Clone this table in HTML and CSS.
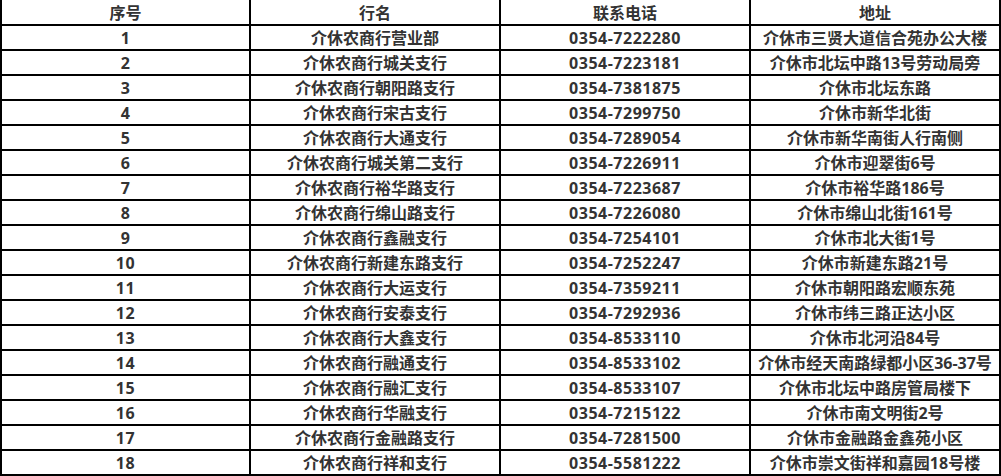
FILE: index.html
```html
<!DOCTYPE html>
<html lang="zh-CN">
<head>
<meta charset="utf-8">
<title>介休农商行网点</title>
<link rel="stylesheet" href="styles.css">
</head>
<body>
<div class="table">
  <div class="cell head">序号</div><div class="cell head">行名</div><div class="cell head">联系电话</div><div class="cell head">地址</div>
  <div class="cell num">1</div><div class="cell">介休农商行营业部</div><div class="cell num">0354-7222280</div><div class="cell">介休市三贤大道信合苑办公大楼</div>
  <div class="cell num">2</div><div class="cell">介休农商行城关支行</div><div class="cell num">0354-7223181</div><div class="cell">介休市北坛中路13号劳动局旁</div>
  <div class="cell num">3</div><div class="cell">介休农商行朝阳路支行</div><div class="cell num">0354-7381875</div><div class="cell">介休市北坛东路</div>
  <div class="cell num">4</div><div class="cell">介休农商行宋古支行</div><div class="cell num">0354-7299750</div><div class="cell">介休市新华北街</div>
  <div class="cell num">5</div><div class="cell">介休农商行大通支行</div><div class="cell num">0354-7289054</div><div class="cell">介休市新华南街人行南侧</div>
  <div class="cell num">6</div><div class="cell">介休农商行城关第二支行</div><div class="cell num">0354-7226911</div><div class="cell">介休市迎翠街6号</div>
  <div class="cell num">7</div><div class="cell">介休农商行裕华路支行</div><div class="cell num">0354-7223687</div><div class="cell">介休市裕华路186号</div>
  <div class="cell num">8</div><div class="cell">介休农商行绵山路支行</div><div class="cell num">0354-7226080</div><div class="cell">介休市绵山北街161号</div>
  <div class="cell num">9</div><div class="cell">介休农商行鑫融支行</div><div class="cell num">0354-7254101</div><div class="cell">介休市北大街1号</div>
  <div class="cell num">10</div><div class="cell">介休农商行新建东路支行</div><div class="cell num">0354-7252247</div><div class="cell">介休市新建东路21号</div>
  <div class="cell num">11</div><div class="cell">介休农商行大运支行</div><div class="cell num">0354-7359211</div><div class="cell">介休市朝阳路宏顺东苑</div>
  <div class="cell num">12</div><div class="cell">介休农商行安泰支行</div><div class="cell num">0354-7292936</div><div class="cell">介休市纬三路正达小区</div>
  <div class="cell num">13</div><div class="cell">介休农商行大鑫支行</div><div class="cell num">0354-8533110</div><div class="cell">介休市北河沿84号</div>
  <div class="cell num">14</div><div class="cell">介休农商行融通支行</div><div class="cell num">0354-8533102</div><div class="cell">介休市经天南路绿都小区36-37号</div>
  <div class="cell num">15</div><div class="cell">介休农商行融汇支行</div><div class="cell num">0354-8533107</div><div class="cell">介休市北坛中路房管局楼下</div>
  <div class="cell num">16</div><div class="cell">介休农商行华融支行</div><div class="cell num">0354-7215122</div><div class="cell">介休市南文明街2号</div>
  <div class="cell num">17</div><div class="cell">介休农商行金融路支行</div><div class="cell num">0354-7281500</div><div class="cell">介休市金融路金鑫苑小区</div>
  <div class="cell num">18</div><div class="cell">介休农商行祥和支行</div><div class="cell num">0354-5581222</div><div class="cell">介休市崇文街祥和嘉园18号楼</div>
</div>
</body>
</html>
```

FILE: styles.css
```css
html, body {
  margin: 0;
  padding: 0;
  background: #ffffff;
}

.table {
  width: 1001px;
  box-sizing: border-box;
  display: grid;
  grid-template-columns: 247px 248px 248px 248px;
  grid-template-rows: 24px;
  grid-auto-rows: 23px;
  gap: 2px;
  padding: 0 2px 2px 2px;
  background: #000000;
  font-family: "Open Sans", "Noto Sans CJK SC", sans-serif;
  font-weight: 700;
  font-size: 16px;
  color: #333333;
}

.cell {
  background: #ffffff;
  display: flex;
  align-items: center;
  justify-content: center;
  white-space: nowrap;
  line-height: 1;
  padding-top: 1px;
}

.head {
  padding-top: 2px;
}

.num {
  letter-spacing: 0.5px;
}
```
